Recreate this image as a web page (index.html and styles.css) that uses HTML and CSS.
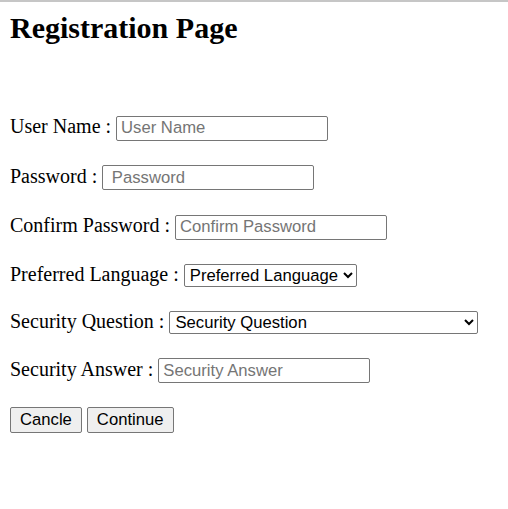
FILE: index.html
```html
<!DOCTYPE html>
<html lang="en">
<head>
<meta charset="utf-8">
<title>Registration Page</title>
<link rel="stylesheet" href="styles.css">
</head>
<body>
<h2 class="title">Registration Page</h2>
<form class="form">
  <p class="row">User Name : <input class="field" type="text" placeholder="User Name"></p>
  <p class="row">Password : <input class="field" type="password" placeholder=" Password"></p>
  <p class="row row-tight">Confirm Password : <input class="field" type="password" placeholder="Confirm Password"></p>
  <p class="row row-tight">Preferred Language : <select class="pick pick-lang"><option>Preferred Language</option></select></p>
  <p class="row">Security Question : <select class="pick pick-question"><option>Security Question</option></select></p>
  <p class="row">Security Answer : <input class="field" type="text" placeholder="Security Answer"></p>
  <p class="row"><button class="btn" type="button">Cancle</button> <button class="btn" type="submit">Continue</button></p>
</form>
</body>
</html>
```
FILE: styles.css
```css
html {
  border-top: 2px solid #c6c6c6;
  background: #fff;
}
body {
  margin: 0;
  padding: 9px 10px 0;
  font-family: "Liberation Serif", "Times New Roman", serif;
  font-size: 20px;
  color: #000;
}
.title {
  margin: 0;
  font-size: 30px;
  font-weight: bold;
}
.form {
  margin-top: 70px;
}
.row {
  margin: 0 0 24px;
}
.row-tight {
  margin-bottom: 23px;
}
.field,
.pick,
.btn {
  font-family: "Liberation Sans", Arial, sans-serif;
  font-size: 16.67px;
  color: #000;
  box-sizing: border-box;
  border: 1px solid #767676;
  border-radius: 2px;
  vertical-align: baseline;
}
.field {
  width: 212px;
  height: 25px;
  padding: 1px 4px;
  background: #fff;
}
.field::placeholder {
  color: #757575;
  white-space: pre;
}
.pick {
  height: 23px;
  padding: 0 1px;
  background: #fff;
}
.pick-lang {
  width: 173px;
}
.pick-question {
  width: 309px;
}
.btn {
  height: 26px;
  padding: 1px 9px;
  background: #efefef;
}
```
